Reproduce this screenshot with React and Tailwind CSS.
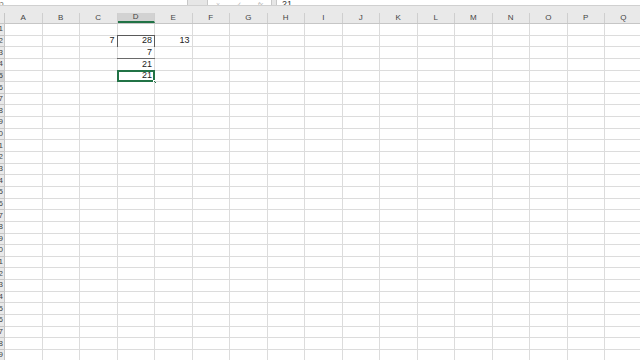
import React from "react";

const COLS = "ABCDEFGHIJKLMNOPQ".split("");
const ROWS = Array.from({ length: 30 }, (_, i) => i + 1);

const data = {
  "C2": "7",
  "D2": "28",
  "E2": "13",
  "D3": "7",
  "D4": "21",
  "D5": "21",
};

function Cell({ col, row }) {
  const key = col + row;
  const v = data[key];
  let overlay = null;
  if (key === "D2") {
    overlay = <div className="absolute inset-[-1px] border-t border-l border-r border-[#5a5a5a] pointer-events-none" />;
  } else if (key === "D3") {
    overlay = <div className="absolute left-[-1px] right-[-1px] bottom-[-1px] h-[1px] bg-[#6a6a6a]" />;
  } else if (key === "D5") {
    overlay = (
      <>
        <div className="absolute inset-[-1px] border-2 border-[#217346]" />
        <div className="absolute right-[-3px] bottom-[-3px] w-[4px] h-[4px] bg-[#217346] border border-white" />
      </>
    );
  }
  return (
    <div className="relative w-[37.5px] shrink-0 h-full border-r border-b border-[#dcdcdc] flex items-end justify-end pr-[2px] pb-[1px] text-[9px] leading-[9px] text-[#222]">
      {v}
      {overlay}
    </div>
  );
}

export default function App() {
  return (
    <div
      className="w-[640px] h-[360px] overflow-hidden bg-white flex flex-col"
      style={{ fontFamily: '"Liberation Sans", Arial, sans-serif' }}
    >
      {/* formula bar strip */}
      <div className="h-[6px] shrink-0 flex bg-[#e6e6e6] border-b border-[#d0d0d0]">
        <div className="w-[188px] bg-white border-r border-[#c8c8c8] text-[7px] leading-none overflow-hidden flex items-end text-[#555]">
          <span className="-mb-[2px]">ɔ</span>
        </div>
        <div className="w-[19px]" />
        <div className="w-[65px] bg-white border-l border-r border-[#c8c8c8] flex items-end justify-around text-[7px] leading-none text-[#bbb] overflow-hidden">
          <span className="-mb-[3px]">×</span>
          <span className="-mb-[3px]">✓</span>
          <span className="-mb-[3px] italic">fx</span>
        </div>
        <div className="w-[4px]" />
        <div className="flex-1 bg-white border-l border-[#c8c8c8] text-[9px] leading-none text-[#333] overflow-hidden flex items-end pl-[5px]">
          <span className="-mb-[4px]">21</span>
        </div>
      </div>
      {/* gap */}
      <div className="h-[7px] shrink-0 bg-[#e9e9e9]" />
      {/* column header */}
      <div className="h-[11px] shrink-0 flex bg-[#e9e9e9] border-b border-[#c6c6c6]">
        <div className="w-[5px] shrink-0 border-r border-[#c6c6c6]" />
        {COLS.map((c) => (
          <div
            key={c}
            className={
              "w-[37.5px] shrink-0 flex items-center justify-center text-[8px] leading-none text-[#444] border-r border-[#cfcfcf] " +
              (c === "D" ? "bg-[#d2d2d2] border-b-2 border-b-[#217346] text-[#1d5c38]" : "")
            }
          >
            {c}
          </div>
        ))}
      </div>
      {/* rows */}
      <div className="flex-1 overflow-hidden">
        {ROWS.map((r) => (
          <div key={r} className="h-[11.65px] flex">
            <div
              className={
                "w-[5px] shrink-0 overflow-hidden flex justify-end items-center border-r border-b border-[#c6c6c6] text-[8px] leading-none text-[#444] whitespace-nowrap " +
                (r === 5 ? "bg-[#d2d2d2]" : "bg-[#e9e9e9]")
              }
            >
              <span className="shrink-0 pr-[1px]">{r}</span>
            </div>
            {COLS.map((c) => (
              <Cell key={c} col={c} row={r} />
            ))}
          </div>
        ))}
      </div>
    </div>
  );
}
